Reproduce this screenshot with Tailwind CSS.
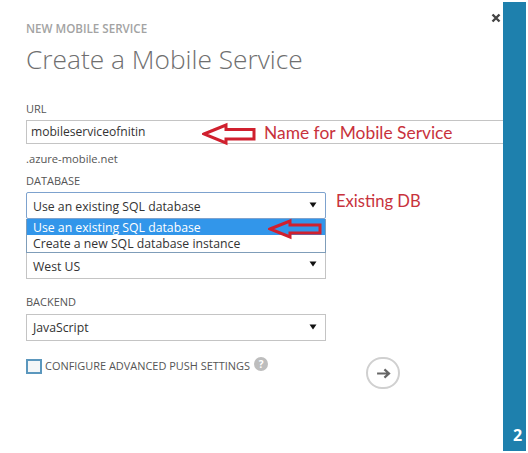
<!DOCTYPE html>
<html>
<head>
<meta charset="utf-8">
<script src="https://cdn.jsdelivr.net/npm/@tailwindcss/browser@4"></script>
</head>
<body class="bg-white overflow-hidden">
<div class="relative w-[528px] h-[453px] flex font-['Open_Sans','Noto_Sans',sans-serif] text-[#4a4a4a]">
  <main class="relative w-[503px] h-full pl-[26px] pt-[21px]">
    <div class="h-[15px] text-[11.6px] leading-[15px] font-semibold text-[#a3a3a3]">NEW MOBILE SERVICE</div>
    <h1 class="mt-[5px] h-[36px] text-[26.3px] leading-[36px] font-light text-[#6f6f6f]">Create a Mobile Service</h1>
    <div class="mt-[25px] h-[14px] text-[11px] leading-[14px] text-[#555]">URL</div>
    <div class="mt-[4px] h-[24px] w-[477px] border-y border-l border-[#c4c4c4] pl-[4px] text-[12.1px] leading-[22px] text-[#333]">mobileserviceofnitin</div>
    <div class="mt-[8px] h-[14px] text-[11.2px] leading-[14px] text-[#555]">.azure-mobile.net</div>
    <div class="mt-[8px] h-[14px] text-[11px] leading-[14px] text-[#555]">DATABASE</div>
    <div class="mt-[4px] relative w-[300px]">
      <div class="h-[27px] border border-[#7da2ce] rounded-[2px] pl-[6px] pr-[8px] pt-[4px] flex items-center justify-between text-[12.25px] text-[#333]">
        <span>Use an existing SQL database</span>
        <svg class="-mt-[6px]" width="8" height="6" viewBox="0 0 8 6"><path d="M0.5 0.5H7.5L4 5.5Z" fill="#111"/></svg>
      </div>
      <div class="h-[34px] border-x border-b border-[#7f9db9] bg-white text-[12.25px]">
        <div class="h-[16px] bg-[#3296ea] pl-[6px] pt-[1px] leading-[16px] text-white">Use an existing SQL database</div>
        <div class="h-[17px] pl-[6px] pt-[1px] leading-[16px] text-[#333]">Create a new SQL database instance</div>
      </div>
      <div class="h-[26px] border-x border-b border-[#c4c4c4] pl-[6px] pr-[8px] pt-[3px] flex items-center justify-between text-[12.25px] text-[#333]">
        <span>West US</span>
        <svg class="-mt-[6px]" width="8" height="6" viewBox="0 0 8 6"><path d="M0.5 0.5H7.5L4 5.5Z" fill="#111"/></svg>
      </div>
    </div>
    <div class="mt-[16px] h-[14px] text-[11px] leading-[14px] text-[#555]">BACKEND</div>
    <div class="mt-[5px] h-[27px] w-[300px] border border-[#c4c4c4] pl-[6px] pr-[8px] pt-[2px] flex items-center justify-between text-[12.25px] text-[#333]">
      <span>JavaScript</span>
      <svg class="-mt-[4px]" width="8" height="6" viewBox="0 0 8 6"><path d="M0.5 0.5H7.5L4 5.5Z" fill="#111"/></svg>
    </div>
    <div class="mt-[17px] flex items-center h-[16px]">
      <div class="w-[16px] h-[15px] border-2 border-[#5b97bd] bg-[#f4f6f7]"></div>
      <span class="ml-[3px] text-[10.95px] text-[#555]">CONFIGURE ADVANCED PUSH SETTINGS</span>
      <span class="ml-[4px] -mt-[4px] w-[14px] h-[14px] rounded-full bg-[#bdbdbd] text-white text-[10px] leading-[14px] font-bold text-center">?</span>
    </div>
    <div class="absolute left-[366px] top-[357px] w-[34px] h-[32px] rounded-full border-2 border-[#d0d0d0] flex items-center justify-center">
      <svg width="15" height="11" viewBox="0 0 16 12"><path d="M1 6H14M9 1.5L14 6L9 10.5" fill="none" stroke="#666" stroke-width="2.4"/></svg>
    </div>
    <svg class="absolute left-[491px] top-[13px]" width="10" height="10" viewBox="0 0 10 10"><path d="M1.5 1.5L8.5 8.5M8.5 1.5L1.5 8.5" stroke="#444" stroke-width="2.4"/></svg>
    <!-- annotations -->
    <svg class="absolute left-[202px] top-[122px]" width="54" height="24" viewBox="0 0 54 24"><path d="M2 12L24 3V7.5H52V17H24V21Z" fill="#fff" stroke="#d0202e" stroke-width="3"/></svg>
    <span class="absolute left-[264px] top-[123px] text-[17.4px] leading-[20px] text-[#c8323c] font-['Lato']">Name for Mobile Service</span>
    <span class="absolute left-[336px] top-[191px] text-[16.6px] leading-[20px] text-[#c8323c] font-['Lato']">Existing DB</span>
    <svg class="absolute left-[268px] top-[218px]" width="54" height="22" viewBox="0 0 54 22"><path d="M2 11L22 3V7H52V15H22V19Z" fill="#3296ea" stroke="#d0202e" stroke-width="3"/></svg>
  </main>
  <aside class="mt-[2px] h-[449px] w-[23px] bg-[#1e80ad] flex items-end justify-center pl-[6px] pb-[6px] text-white text-[16px] leading-[20px] font-bold">2</aside>
</div>
</body>
</html>
